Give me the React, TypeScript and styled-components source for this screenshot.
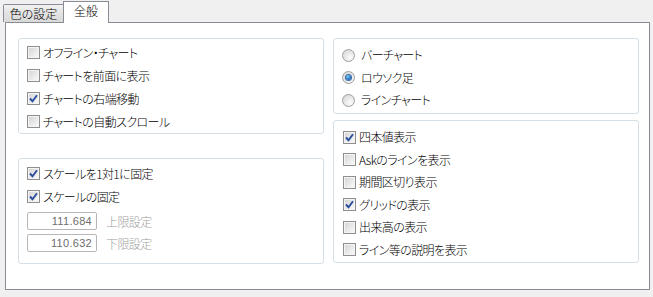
import React from 'react'
import styled, { createGlobalStyle, css } from 'styled-components'

const GlobalStyle = createGlobalStyle`
  html, body {
    margin: 0;
    padding: 0;
    background: #f0f0f0;
  }
  body {
    font-family: "Noto Sans CJK JP", "Liberation Sans", sans-serif;
    font-size: 12px;
    font-weight: 300;
    color: #000;
    font-feature-settings: "palt";
  }
`

const Window = styled.div`
  width: 653px;
  height: 297px;
  box-sizing: border-box;
  background: #f0f0f0;
`

const TabStrip = styled.div`
  display: flex;
  align-items: flex-end;
  height: 22px;
  padding-left: 3px;
`

const Tab = styled.div<{ $active?: boolean }>`
  box-sizing: border-box;
  display: flex;
  align-items: center;
  justify-content: center;
  border: 1px solid #898c95;
  border-bottom: none;
  line-height: 1;
  position: relative;
  ${(p) =>
    p.$active
      ? css`
          width: 46px;
          height: 22px;
          margin-bottom: -1px;
          margin-left: -1px;
          background: #fff;
          z-index: 2;
          padding-bottom: 3px;
        `
      : css`
          width: 61px;
          height: 18px;
          background: linear-gradient(#f2f2f2, #e3e3e3 50%, #d9d9d9);
          border-top-left-radius: 2px;
          padding-top: 1px;
        `}
`

const Panel = styled.div`
  box-sizing: border-box;
  position: relative;
  z-index: 1;
  margin-left: 5px;
  width: 645px;
  height: 268px;
  border: 1px solid #898c95;
  background: #fff;
  padding: 15px 10px 0 12px;
  display: grid;
  grid-template-columns: 306px 306px;
  column-gap: 9px;
  align-items: start;
`

const Column = styled.div<{ $gap: number }>`
  display: flex;
  flex-direction: column;
  gap: ${(p) => p.$gap}px;
`

const Group = styled.div<{ $h: number; $top: number; $left: number }>`
  box-sizing: border-box;
  height: ${(p) => p.$h}px;
  border: 1px solid #d5dfe5;
  border-radius: 3px;
  padding: ${(p) => p.$top}px 0 0 ${(p) => p.$left}px;
  display: flex;
  flex-direction: column;
`

const Row = styled.label<{ $h: number }>`
  display: flex;
  align-items: center;
  gap: 3px;
  height: ${(p) => p.$h}px;
  white-space: nowrap;
  line-height: 1;
`

const Box = styled.span`
  box-sizing: border-box;
  width: 13px;
  height: 13px;
  flex: none;
  border: 1px solid #8f8f8f;
  background: linear-gradient(135deg, #d2d2d2, #f0f0f0 70%, #fafafa);
  box-shadow: inset 0 0 0 1px #f4f4f4;
  display: flex;
  align-items: center;
  justify-content: center;
`

const Radio = styled.span<{ $on?: boolean }>`
  box-sizing: border-box;
  width: 13px;
  height: 13px;
  flex: none;
  border-radius: 50%;
  border: 1px solid #a0a0a0;
  background: radial-gradient(circle at 65% 70%, #fcfcfc, #dadada 80%);
  display: flex;
  align-items: center;
  justify-content: center;
  margin-right: 3px;
  ${(p) =>
    p.$on &&
    css`
      &::after {
        content: '';
        width: 5px;
        height: 5px;
        border-radius: 50%;
        background: radial-gradient(circle at 40% 35%, #8ad0ff, #1b6fc0 60%, #0b3c7a);
        box-shadow: 0 0 0 1px #3a6ea5;
      }
    `}
`

const Label = styled.span<{ $disabled?: boolean }>`
  color: ${(p) => (p.$disabled ? '#a0a0a0' : '#000')};
  letter-spacing: -0.6px;
`

const FieldRow = styled.div`
  display: flex;
  align-items: center;
  gap: 9px;
  height: 18px;
  margin-top: 4px;
`

const Field = styled.div`
  box-sizing: border-box;
  width: 70px;
  height: 18px;
  border: 1px solid #b7b7b7;
  border-radius: 2px;
  background: #fff;
  color: #6d6d6d;
  font-family: "Liberation Sans", sans-serif;
  font-size: 11px;
  font-weight: 400;
  letter-spacing: 0.3px;
  display: flex;
  align-items: center;
  justify-content: flex-end;
  padding-right: 4px;
`

const Check = () => (
  <svg width="9" height="9" viewBox="0 0 9 9">
    <path d="M1 4.5 L3.5 7.2 L8 1.2" fill="none" stroke="#2a4d9c" strokeWidth="1.9" />
  </svg>
)

const CheckItem = ({ label, checked, h = 23 }: { label: string; checked?: boolean; h?: number }) => (
  <Row $h={h}>
    <Box>{checked && <Check />}</Box>
    <Label>{label}</Label>
  </Row>
)

const RadioItem = ({ label, on }: { label: string; on?: boolean }) => (
  <Row $h={22.5}>
    <Radio $on={on} />
    <Label>{label}</Label>
  </Row>
)

export default function App() {
  return (
    <Window>
      <GlobalStyle />
      <TabStrip>
        <Tab>色の設定</Tab>
        <Tab $active>全般</Tab>
      </TabStrip>
      <Panel>
        <Column $gap={24}>
          <Group $h={96} $top={2} $left={8}>
            <CheckItem label="オフライン・チャート" />
            <CheckItem label="チャートを前面に表示" />
            <CheckItem label="チャートの右端移動" checked />
            <CheckItem label="チャートの自動スクロール" />
          </Group>
          <Group $h={106} $top={3} $left={8}>
            <CheckItem label="スケールを1対1に固定" checked />
            <CheckItem label="スケールの固定" checked />
            <FieldRow>
              <Field>111.684</Field>
              <Label $disabled>上限設定</Label>
            </FieldRow>
            <FieldRow>
              <Field>110.632</Field>
              <Label $disabled>下限設定</Label>
            </FieldRow>
          </Group>
        </Column>
        <Column $gap={6}>
          <Group $h={76} $top={5} $left={8}>
            <RadioItem label="バーチャート" />
            <RadioItem label="ロウソク足" on />
            <RadioItem label="ラインチャート" />
          </Group>
          <Group $h={143} $top={5} $left={9}>
            <CheckItem h={22.5} label="四本値表示" checked />
            <CheckItem h={22.5} label="Askのラインを表示" />
            <CheckItem h={22.5} label="期間区切り表示" />
            <CheckItem h={22.5} label="グリッドの表示" checked />
            <CheckItem h={22.5} label="出来高の表示" />
            <CheckItem h={22.5} label="ライン等の説明を表示" />
          </Group>
        </Column>
      </Panel>
    </Window>
  )
}
